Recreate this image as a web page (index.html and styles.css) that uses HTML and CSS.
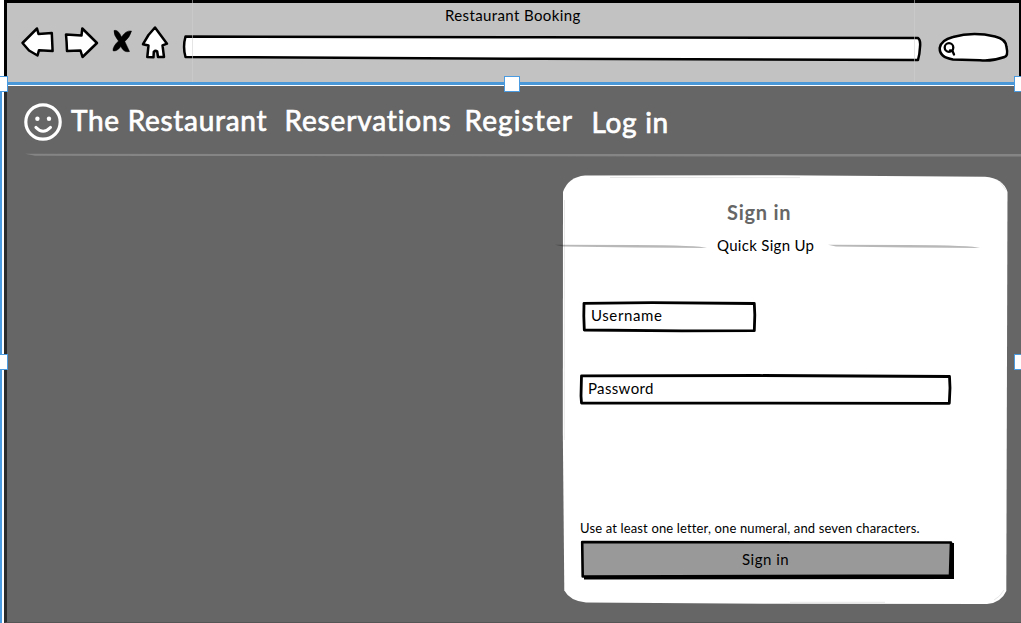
FILE: index.html
```html
<!DOCTYPE html>
<html lang="en">
<head>
<meta charset="utf-8">
<title>Restaurant Booking</title>
<link rel="stylesheet" href="styles.css">
</head>
<body>
<div class="window">
  <header class="chrome">
    <div class="window-title"><span>Restaurant Booking</span></div>
    <div class="toolbar">
      <svg class="back" width="34" height="32" viewBox="21 26 34 32"><path d="M22.5 43 L37 28.5 L38.5 34 L51.8 33 L52.6 51 L39 50.2 L37.5 55.5 L29 50.5Z"/></svg>
      <svg class="forward" width="36" height="34" viewBox="63 26 36 34"><path d="M66 34.5 L81.5 35.5 L82.3 28.5 L97 43 L82.5 57 L80.5 50.5 L67 51 L66.6 42Z"/></svg>
      <svg class="stop" width="22" height="26" viewBox="111 28 22 26"><path class="solid" d="M114 30.5 Q118 29 121.5 37 Q126 30 131.5 31 Q130 37 124.8 41.5 L129.5 51.5 Q124 53 120.8 46.5 Q117 51.8 113 50.8 Q112.6 46.5 118.5 41 Q113.5 35 114 30.5Z"/></svg>
      <svg class="home" width="28" height="34" viewBox="141 26 28 34"><path d="M155 27.5 L167 43.7 L162.5 45.4 L164 57 L158 57 L157.2 51.5 Q155.5 50 153.8 51.8 L153.5 57.2 L147.3 57 L148.5 45.5 L143 44.2 L148.5 35Z"/></svg>
      <svg class="address" width="741" height="28" viewBox="182 34 741 28"><path d="M185.5 36.5 L540 37.2 L918 38 Q920.8 40 920 47 Q919.7 54 918 60 L540 58.8 L185.5 57 Q182.6 47 185.5 36.5Z"/></svg>
      <svg class="search" width="72" height="32" viewBox="937 32 72 32"><path d="M953 37 Q973 31.5 995 36.5 Q1006 39 1006.5 47 Q1008.5 56 1004.5 57 Q992 61.5 980 60.3 L953 59.4 Q939.5 57.5 939.7 48 Q941 40 953 37Z"/><circle class="line" cx="949" cy="47.5" r="4.3"/><path class="line" d="M950 50.5 L952.5 51 L954 54.5"/></svg>
    </div>
  </header>
  <main class="page">
    <nav class="nav">
      <svg class="smile" width="40" height="40" viewBox="0 0 40 40"><circle cx="20" cy="20" r="17.2"/><circle class="eye" cx="14.4" cy="16.7" r="2.2"/><circle class="eye" cx="26" cy="16.7" r="2.2"/><path d="M13 25.5 Q20 33 27.4 25.5"/></svg>
      <a class="brand">The Restaurant</a>
      <a class="reservations">Reservations</a>
      <a class="register">Register</a>
      <a class="login">Log in</a>
    </nav>
    <svg class="rule" width="996" height="5" viewBox="0 0 996 5"><path d="M0 .8 Q500 1.3 996 1 L996 3.4 Q500 3.5 10 2.8Z"/></svg>
    <section class="card">
      <svg class="card-bg" width="446" height="430" viewBox="562 175 446 430"><path class="paper" d="M585 175.4 L780 175.2 L985 176.8 Q1003 178 1007.5 192 L1006.3 591 Q1001 603 987 604 L780 603.8 L586 602.5 Q570 601 564.3 590.5 L562.8 430 L563 192 Q568 177 585 175.4Z"/><path class="trace" d="M610 177.5 L800 177.6 M564.5 200 L564.3 440 M790 602.3 L885 602.3 M1004 590 Q1000 597 994 600 M1000 182 L1006 190"/></svg>
      <div class="card-body">
        <h1><span>Sign in</span></h1>
        <div class="divider">
          <svg width="152" height="5" viewBox="0 0 152 5"><path d="M0 .8 L80 .9 Q145 1.2 152 4 L80 3.5 L8 2.5Z"/></svg>
          <span class="quick">Quick Sign Up</span>
          <svg width="152" height="5" viewBox="0 0 152 5"><path d="M0 .8 L80 .9 Q145 1.2 152 4 L80 3.5 L8 2.5Z"/></svg>
        </div>
        <div class="field username"><svg width="175" height="32" viewBox="0 0 175 32"><path d="M2 2.3 L70 1.7 L172.3 2.5 L172.8 14 L172.3 29.6 L100 29.8 L2.3 29 L1.8 15Z"/></svg><span>Username</span></div>
        <div class="field password"><svg width="373" height="32" viewBox="0 0 373 32"><path d="M2.5 1.8 L180 1.5 L370.5 2.5 L371 14 L370.3 29.3 L190 29.1 L2.5 29 L2 22Z"/></svg><span>Password</span></div>
        <p class="hint"><span>Use at least one letter, one numeral, and seven characters.</span></p>
        <div class="submit"><svg width="375" height="40" viewBox="0 0 375 40"><path class="shadow" d="M4 4 L374 3 L374 39 L4 39.5Z"/><path class="face" d="M2.2 2 L371 2.5 L370 35.5 L190 36 L2.7 36.5Z"/></svg><span>Sign in</span></div>
      </div>
    </section>
  </main>
  <div class="seam seam-left"></div>
  <div class="seam seam-right"></div>
  <div class="selection-left"></div>
  <div class="selection-top"></div>
  <i class="handle tl"></i><i class="handle tc"></i><i class="handle tr"></i>
  <i class="handle ml"></i><i class="handle mr"></i>
</div>
</body>
</html>
```
FILE: styles.css
```css
* { box-sizing: border-box; }
body { margin: 0; font-family: Lato, "Open Sans", sans-serif; color: #000; }
svg { display: block; flex: none; overflow: visible; }
.window { position: relative; width: 1021px; height: 623px; overflow: hidden; background: #fff; padding-left: 4px; }
.chrome { height: 83px; border: 3px solid #000; border-width: 3px 2px 0 3px; background: #c2c2c2; }
.window-title { height: 23px; padding: 2px 0 0 438px; font-size: 15px; line-height: 20px; white-space: nowrap; letter-spacing: .38px; }
.toolbar { display: flex; align-items: flex-start; padding-left: 14px; }
.toolbar path { fill: #fff; stroke: #000; stroke-width: 2.5; stroke-linejoin: round; }
.toolbar .solid { fill: #000; stroke-width: .5; }
.toolbar .line { fill: none; stroke: #000; stroke-width: 2.3; stroke-linecap: round; }
.forward { margin-left: 8px; }
.stop { margin: 2px 0 0 12px; }
.home { margin-left: 8px; }
.address { margin: 8px 0 0 13px; }
.search { margin: 6px 0 0 14px; }
.page { height: 540px; border-left: 3px solid #2a2a2a; border-bottom: 1px solid #555; background: #666; display: flex; flex-direction: column; padding-top: 18px; }
.nav { display: flex; height: 49px; padding-left: 16px; color: #fff; font-size: 28px; line-height: 34px; white-space: nowrap; -webkit-text-stroke: .7px #fff; letter-spacing: .7px; }
.smile { margin: 1px 8px 0 0; fill: none; stroke: #fff; stroke-width: 3.2; stroke-linecap: round; }
.smile .eye { fill: #fff; stroke: none; }
.nav a { padding-top: 2px; }
.brand { width: 213.5px; }
.reservations { width: 180px; letter-spacing: .85px; }
.register { width: 127px; letter-spacing: 1.1px; }
.nav .login { padding-top: 4px; }
.rule { margin: 3px 0 0 18px; fill: #858585; }
.card { display: grid; width: 446px; height: 430px; margin: 17px 0 0 555px; }
.card-bg, .card-body { grid-area: 1 / 1; }
.paper { fill: #fff; }
.trace { fill: none; stroke: #ddd; stroke-width: .7; }
.card-body { display: flex; flex-direction: column; align-items: flex-start; white-space: nowrap; }
.card h1 { margin: 24px 0 0 165px; color: #666; font-size: 20px; line-height: 26px; height: 26px; font-weight: 700; letter-spacing: .75px; }
.divider { display: flex; align-items: center; height: 20px; margin: 11px 0 0 -7px; font-size: 15px; }
.divider svg { fill: #000; fill-opacity: .28; }
.quick { width: 121px; padding: 0 0 2px 10px; letter-spacing: .3px; }
.field, .submit { display: grid; font-size: 15px; }
.field > *, .submit > * { grid-area: 1 / 1; align-self: center; }
.field path { fill: #fff; stroke: #000; stroke-width: 2.8; stroke-linejoin: round; }
.field span { padding: 0 0 4px 9px; }
.username { margin: 45px 0 0 20px; letter-spacing: .6px; }
.password { margin: 41px 0 0 17px; letter-spacing: .35px; }
.hint { margin: 112px 0 0 18px; font-size: 13px; height: 20px; line-height: 20px; letter-spacing: .15px; }
.submit { margin: 2px 0 0 18px; letter-spacing: .5px; }
.submit span { padding: 0 0 3px 162px; }
.face { fill: #999; stroke: #000; stroke-width: 2.6; stroke-linejoin: round; }
.shadow { fill: #000; }
.seam { position: absolute; top: 0; width: 1px; height: 82px; background: #d0d0d0; opacity: .55; }
.seam-left { left: 192px; }
.seam-right { left: 914px; }
.selection-left { position: absolute; left: 0; top: 83px; width: 4px; height: 540px; background: #fff; border-left: 2px solid #4a9be0; }
.selection-top { position: absolute; left: 0; top: 82px; width: 1021px; height: 4px; background: #4a98d8; border-bottom: 1px solid #fff; }
.handle { position: absolute; width: 16px; height: 16px; background: #fff; border: 1px solid #4a9be0; }
.tl, .ml { left: -8px; }
.tc { left: 504px; }
.tr, .mr { left: 1014px; }
.tl, .tc, .tr { top: 76px; }
.ml, .mr { top: 354px; }
```
